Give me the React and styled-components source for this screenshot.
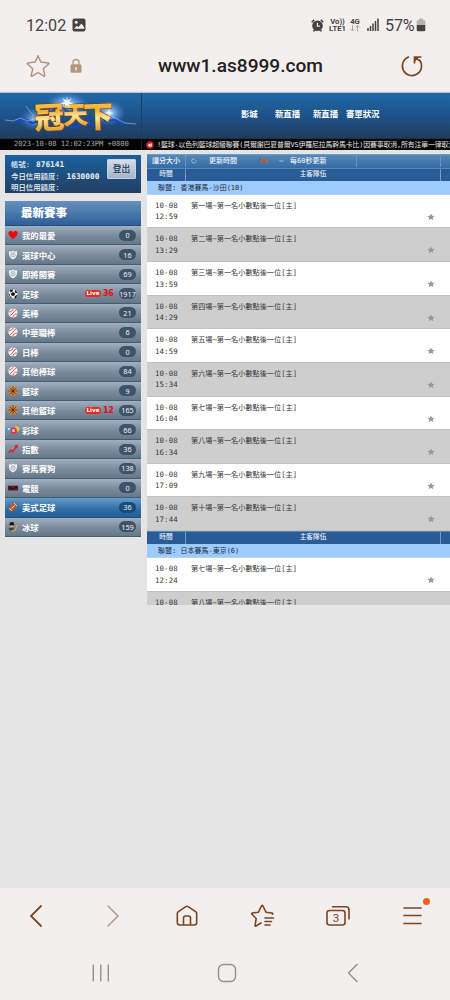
import React from 'react'
import styled, { createGlobalStyle } from 'styled-components'

const GlobalStyle = createGlobalStyle`
    * {
        box-sizing: border-box;
    }

    body {
        margin: 0;
        background: #e5e5e5;
        overflow: hidden;
    }
`

const Phone = styled.div`
    width: 450px;
    height: 1000px;
    display: flex;
    flex-direction: column;
    overflow: hidden;
    background: #e5e5e5;
    font-family: 'DejaVu Sans Mono', 'Noto Sans CJK TC', monospace;
    white-space: nowrap;
`

const StatusBar = styled.div`
    height: 50px;
    flex: none;
    padding: 0 24px 0 26px;
    display: flex;
    align-items: center;
    background: #f3efee;
    color: #454342;
    font-family: Roboto, sans-serif;
    font-size: 16.4px;
`

const Clock = styled.span`
    width: 46px;
    font-size: 16.2px;
`

const StatusIcons = styled.div`
    margin-left: auto;
    display: flex;
    align-items: center;
`

const Network = styled.div`
    width: ${props => props.width};
    margin-left: ${props => props.left};
    font-size: 7.7px;
    font-weight: 700;
    line-height: 7px;
    text-align: center;
`

const Arrows = styled.svg`
    display: block;
    margin: 0 auto;
`

const Percent = styled.span`
    margin-left: 6px;
    width: 31px;
    font-size: 16.2px;
    letter-spacing: -0.2px;
`

const AddressBar = styled.div`
    height: 41px;
    flex: none;
    padding: 0 26px 10px 25px;
    display: flex;
    align-items: center;
    background: #f3efee;
    color: #222020;
`

const Lock = styled.div`
    margin-left: 18px;
    width: 14px;
    height: 16px;
    svg {
        display: block;
    }
`

const Url = styled.span`
    flex: 1;
    padding-left: 75px;
    font-family: Roboto, sans-serif;
    font-size: 19.1px;
    font-weight: 500;
`

const SiteHeader = styled.header`
    height: 46px;
    flex: none;
    margin-top: 1px;
    display: flex;
    border-top: 1px solid #b7c4d2;
    background: linear-gradient(#1f68a9, #1e5389 50%, #203c60);
`

const LogoBox = styled.div`
    width: 142px;
    height: 45px;
    border-right: 1px solid #1b3e67;
`

const TopNav = styled.nav`
    display: flex;
    padding-left: 99px;
    line-height: 43px;
    color: white;
    font-size: 8.4px;
    font-weight: 700;
`

const TopLink = styled.a`
    width: ${props => props.width};
`

const Ticker = styled.div`
    height: 12px;
    flex: none;
    display: flex;
    align-items: center;
    overflow: hidden;
    background: #050505;
    border-top: 1px solid #23303d;
    line-height: 10px;
`

const Stamp = styled.div`
    width: 142px;
    height: 11px;
    flex: none;
    padding-left: 14px;
    border-right: 1px solid #222;
    color: #a5a5a5;
    font-size: 7.2px;
    letter-spacing: -0.08px;
`

const News = styled.div`
    margin-left: 4px;
    display: flex;
    align-items: center;
    gap: 3px;
    color: #e4e4e4;
    font-size: 6.9px;
    letter-spacing: -0.14px;
    svg {
        flex: none;
    }
`

const NewsText = styled.div`
    width: 294px;
    overflow: hidden;
`

const Main = styled.main`
    flex: 1;
    min-height: 0;
    display: flex;
    align-items: flex-start;
    gap: 6px;
    padding: 4px 0 0 5px;
`

const Sidebar = styled.aside`
    width: 136px;
    flex: none;
    padding-top: 1px;
`

const Account = styled.div`
    height: 38px;
    display: flex;
    justify-content: space-between;
    padding: 4px 5px 0 6px;
    background: linear-gradient(#1a609f, #233f62);
    color: #e9f0f7;
    font-size: 7.2px;
    font-weight: 500;
    line-height: 11.6px;
`

const AccountLine = styled.div`
    height: 11.6px;
    display: flex;
`

const Label = styled.span`
    width: ${props => props.width};
    font-size: 7.4px;
`

const Value = styled.b`
    font-size: 7.8px;
`

const Logout = styled.button`
    width: 29px;
    height: 20px;
    padding: 0;
    border: 1px solid #c6d0de;
    border-radius: 1px;
    background: linear-gradient(#d7dde8, #a3b3ca);
    color: #193a61;
    font-family: 'Noto Sans CJK TC', sans-serif;
    font-size: 8.7px;
    font-weight: 500;
    line-height: 16px;
`

const SideTitle = styled.h2`
    height: 25px;
    margin: 8px 0 0;
    padding-left: 16px;
    background: linear-gradient(#6690bd, #2f5f99);
    border-bottom: 1px solid #1f4f89;
    color: white;
    font-size: 11.5px;
    font-weight: 900;
    line-height: 24.5px;
`

const Sport = styled.div`
    height: 19.44px;
    display: flex;
    align-items: center;
    padding: 0 5px 0 3px;
    border-bottom: 1px solid ${props => (props.$active ? '#1e507f' : '#465c70')};
    background: ${props =>
        props.$active
            ? 'linear-gradient(#659ccb, #2d6ca4 60%, #255d94)'
            : 'linear-gradient(#a2afbf, #798a9b 55%, #65788a)'};
    color: white;
    font-size: 8.4px;
    font-weight: 700;
`

const SportIcon = styled.div`
    width: 11px;
    height: 10px;
    margin-right: 3px;
    svg {
        display: block;
    }
`

const Live = styled.span`
    width: 16px;
    height: 7px;
    margin-left: auto;
    border-radius: 3px;
    background: #e22c22;
    color: white;
    font-family: 'DejaVu Sans', sans-serif;
    font-size: 5.6px;
    font-weight: 700;
    line-height: 7px;
    text-align: center;
`

const LiveCount = styled.span`
    width: 11px;
    margin: 0 5px 0 2px;
    color: #e50d17;
    font-family: 'DejaVu Sans', sans-serif;
    font-size: 8px;
    font-weight: 700;
    letter-spacing: -0.2px;
`

const Count = styled.span`
    width: 17px;
    height: 11px;
    margin-left: ${props => (props.$live ? '0' : 'auto')};
    display: flex;
    align-items: center;
    justify-content: center;
    border-radius: 6px;
    background: ${props => (props.$active ? '#164b7c' : '#3e5368')};
    color: #eef2f6;
    font-family: 'Noto Sans', sans-serif;
    font-size: 7.3px;
    font-weight: 400;
`

const Odds = styled.section`
    width: 303px;
    height: 451px;
    flex: none;
    overflow: hidden;
    background: white;
`

const Tools = styled.div`
    height: 13.5px;
    display: flex;
    background: linear-gradient(#5488b7, #356ba6);
    border-top: 1px solid #6e9bc3;
    color: #f1f6fb;
    font-size: 7px;
    font-weight: 500;
    line-height: 12px;
`

const ToolCell = styled.div`
    width: ${props => props.width};
    height: 12px;
    padding-left: ${props => props.left || '0'};
    border-right: 1px solid ${props => (props.$line ? '#6a95c1' : 'transparent')};
    color: ${props => props.color || 'inherit'};
    svg {
        display: block;
        margin-top: 3px;
    }
`

const Head = styled.div`
    height: 13.4px;
    display: flex;
    border-top: 1px solid #5a86b7;
    background: #295b97;
    color: #e8eff7;
    font-size: 6.7px;
    font-weight: 500;
    line-height: 11.5px;
    text-align: center;
`

const HeadCell = styled.div`
    width: ${props => props.width};
    border-right: 1px solid #779bc4;
`

const League = styled.div`
    height: 13.8px;
    padding-left: 11px;
    background: #9dcbff;
    border-bottom: 1px solid #b8d4ef;
    color: #202b38;
    font-size: 7px;
    line-height: 14px;
`

const Match = styled.div`
    height: 33.65px;
    display: flex;
    padding-top: 5px;
    border-bottom: 1px solid #c2c2c2;
    background: ${props => (props.$odd ? '#cecece' : '#fff')};
    color: #373737;
    line-height: 11.6px;
`

const Time = styled.div`
    width: 44px;
    padding-left: 8px;
    font-size: 7.4px;
    letter-spacing: 0.1px;
`

const Team = styled.div`
    width: 236px;
    font-size: 7.17px;
`

const Favorite = styled.div`
    padding-top: 13px;
    svg {
        display: block;
    }
`

const Toolbar = styled.footer`
    height: 58px;
    flex: none;
    padding: 0 23px 3px;
    display: flex;
    align-items: center;
    justify-content: space-between;
    background: #f3efee;
`

const ToolIcon = styled.div`
    width: 28px;
    height: 28px;
    position: relative;
    svg {
        display: block;
    }
`

const Dot = styled.i`
    position: absolute;
    top: -4px;
    right: -3px;
    width: 7px;
    height: 7px;
    border-radius: 50%;
    background: #f0621f;
`

const SystemNav = styled.div`
    height: 54px;
    flex: none;
    padding: 0 83px 0 87px;
    display: flex;
    align-items: center;
    justify-content: space-between;
    background: #f3efee;
`

const brown = '#7c4521'

const sports = [
    { name: '我的最愛', icon: 'heart', count: 0 },
    { name: '滾球中心', icon: 'shield', count: 16 },
    { name: '即將開賽', icon: 'shield', count: 69 },
    { name: '足球', icon: 'soccer', count: 1917, live: 36 },
    { name: '美棒', icon: 'baseball', count: 21 },
    { name: '中華職棒', icon: 'baseball', count: 6 },
    { name: '日棒', icon: 'baseball', count: 0 },
    { name: '其他棒球', icon: 'baseball', count: 84 },
    { name: '籃球', icon: 'basketball', count: 9 },
    { name: '其他籃球', icon: 'basketball', count: 165, live: 12 },
    { name: '彩球', icon: 'lottery', count: 66 },
    { name: '指數', icon: 'chart', count: 36 },
    { name: '賽馬賽狗', icon: 'shield', count: 138 },
    { name: '電競', icon: 'esport', count: 0 },
    { name: '美式足球', icon: 'football', count: 36, active: true },
    { name: '冰球', icon: 'hockey', count: 159 },
]

const hongKong = [
    ['一', '12:59'],
    ['二', '13:29'],
    ['三', '13:59'],
    ['四', '14:29'],
    ['五', '14:59'],
    ['六', '15:34'],
    ['七', '16:04'],
    ['八', '16:34'],
    ['九', '17:09'],
    ['十', '17:44'],
]

const japan = [
    ['七', '12:24'],
    ['八', ''],
]

const glyphs = {
    heart: <path d="M5 9.2C3 7.4.3 5.4.4 3 .5.8 3.6.3 5 2.5 6.4.3 9.6.8 9.7 3 9.7 5.4 7 7.4 5 9.2Z" fill="#f00808" />,
    shield: (
        <g>
            <path d="M5 .6 6.5 1.5 9 1.2C9.4 5 8.6 7.8 5 9.5 1.4 7.8.6 5 1 1.2L3.5 1.5Z" fill="#eef2f5" />
            <circle cx="5" cy="4.8" r="2.2" fill="none" stroke="#8b98a6" strokeWidth=".7" />
            <path d="M4 4.3h2M5 4.3v1.5" stroke="#8b98a6" strokeWidth=".6" />
        </g>
    ),
    soccer: (
        <g>
            <circle cx="5" cy="5" r="4.6" fill="#eee" />
            <path d="m5 3 2.1 1.4-.8 2.4H3.700l-.8-2.400ZM2 1l3-.6-.4 1.800-2.200 1.200ZM7.400 1l2 2.700-1.600.6-1.100-1.900ZM.4 4l1.500 1.500-.5 2.300ZM2.800 7.300l1.300 2.200-2.600-1.500ZM9.600 5.600 8 9l-1.700.4.600-2.200Z" fill="#111" />
        </g>
    ),
    baseball: (
        <g>
            <circle cx="5" cy="5" r="4.6" fill="#f8f2f1" />
            <path d="M.9 3.9C2.800 3.900 4.800 2.600 5.200.6M4.800 9.300C5 7.400 7 5.800 9.200 6.100M2 8.300 8 1.800" fill="none" stroke="#df4547" strokeWidth=".9" />
        </g>
    ),
    basketball: (
        <g>
            <circle cx="5" cy="5" r="4.7" fill="#d9853a" />
            <path d="M.5 5h9M5 .5v9M1.8 1.8l6.400 6.400M8.200 1.800 1.800 8.200" stroke="#4a2811" strokeWidth=".7" />
            <circle cx="5" cy="5" r="1" fill="#4a2811" />
        </g>
    ),
    lottery: (
        <g>
            <circle cx="1.2" cy="4.4" r="2.3" fill="#45a7e4" />
            <circle cx="8.7" cy="4" r="2.8" fill="#d8cc32" />
            <circle cx="5.7" cy="5.7" r="3.2" fill="#dd3544" />
            <circle cx="5.5" cy="5.4" r="1.5" fill="#f5dce0" />
            <path d="M4.8 5.4h1.5" stroke="#a44" strokeWidth=".6" />
            <circle cx=".8" cy="4" r="1" fill="#e2eef6" />
        </g>
    ),
    chart: <path d="m.7 8.8 2.6-2.7 1.5 1.8L8.7 2M6.4 2.5l2.6-1v2.7" fill="none" stroke="#f01820" strokeWidth="1.3" />,
    esport: (
        <g>
            <path d="M0 2.7h10v4.8H0Z" fill="#541c25" />
            <path d="M1 5h2M2 4v2M7 4.5h2M4 5.5h2" stroke="#23080c" strokeWidth=".9" />
        </g>
    ),
    football: (
        <g>
            <path d="M.8 9.2C.1 4.2 4.1.2 9.2.8 9.9 5.8 5.8 9.9.8 9.2Z" fill="#b9582a" />
            <path d="M1.2 6.2 3.9 9M6 1l3 3M3.4 6.6l3.2-3.2M3.8 5l1.2 1.2M5 3.8 6.2 5" stroke="#f4e7dd" strokeWidth=".8" />
        </g>
    ),
    hockey: (
        <g>
            <circle cx="3.8" cy="2.5" r="2.4" fill="#161616" />
            <path d="M1.7 3.2h4.1v2H2Z" fill="#d6a46c" />
            <path d="M.8 6.1 6 5.5 5.2 9H2Z" fill="#353f4d" />
            <path d="M9.3 3 7.1 8.3 3 9.1" fill="none" stroke="#dfa13f" strokeWidth="1.2" />
        </g>
    ),
}

const Star = () => (
    <svg width="8" height="8" viewBox="0 0 10 10">
        <path d="m5 .5 1.3 3 3.3.2-2.5 2.1.8 3.3L5 7.3 2.1 9.1l.8-3.3L.4 3.7l3.3-.2Z" fill="#979797" />
    </svg>
)

const Logo = () => (
    <svg width="140" height="44" viewBox="0 0 140 44" overflow="visible">
        <defs>
            <linearGradient id="gold" x1="0" y1="0" x2="0" y2="1">
                <stop offset=".1" stopColor="#ffcf45" />
                <stop offset=".4" stopColor="#eeb13a" />
                <stop offset=".58" stopColor="#ffe596" />
                <stop offset=".9" stopColor="#dc931f" />
            </linearGradient>
            <radialGradient id="glow">
                <stop offset="0" stopColor="#fff" />
                <stop offset=".25" stopColor="#a7cfff" stopOpacity=".8" />
                <stop offset="1" stopColor="#3580e0" stopOpacity="0" />
            </radialGradient>
        </defs>
        <ellipse cx="67" cy="11" rx="22" ry="12" fill="url(#glow)" />
        <ellipse cx="35" cy="26" rx="16" ry="12" fill="url(#glow)" opacity=".7" />
        <ellipse cx="109" cy="20" rx="17" ry="13" fill="url(#glow)" />
        <g fill="none" strokeLinejoin="round">
            <path d="M16 28q8-4 16 2l9-2M52 17q8-5 14 0t12-3M66 32l8 3 12-5 9 2M104 28l10-1 9 3" stroke="#1845d8" strokeWidth="2.2" />
            <path d="m5 27 8 1 7-3 8 3 9-3M26 13l6 8 5 6M108 21l9 5 8 4 11 1M50 17l9-6 8 5 9-6" stroke="#9cc8ff" strokeWidth=".6" />
        </g>
        <g fontFamily="Noto Sans CJK TC, sans-serif" fontWeight="900" fill="url(#gold)" stroke="#6a4317" strokeWidth="1.3" paintOrder="stroke" strokeLinejoin="round">
            <text x="34" y="35.5" fontSize="30" transform="rotate(-3 49 23)">冠</text>
            <text x="63" y="31" fontSize="25" transform="rotate(-2 75 22)">天</text>
            <text x="83" y="34.5" fontSize="30" transform="rotate(-2 98 23)">下</text>
        </g>
        <path d="m67 3 .7 4.500 4-2.500-2.700 4 5 1.500-5 .8.7 4-2.700-3.200-2.700 3 .7-3.800-5-.8 5-1.500-2.700-4 4 2.500ZM109 15l.7 4.300 4.300.7-4.300.7-.7 4.300-.7-4.300-4.300-.7 4.300-.7Z" fill="#eef7ff" />
    </svg>
)

const TableHead = () => (
    <Head>
        <HeadCell width="39px">時間</HeadCell>
        <HeadCell width="255px">主客隊伍</HeadCell>
    </Head>
)

const Matches = ({ rows }) =>
    rows.map(([no, time], i) => (
        <Match key={no} $odd={i % 2 === 1}>
            <Time>
                10-08
                <br />
                {time}
            </Time>
            <Team>第{no}場~第一名小數點後一位[主]</Team>
            <Favorite>
                <Star />
            </Favorite>
        </Match>
    ))

const App = () => {
    return (
        <Phone>
            <GlobalStyle />
            <StatusBar>
                <Clock>12:02</Clock>
                <svg width="14" height="14" viewBox="0 0 14 14">
                    <rect x=".5" y=".5" width="13" height="13" rx="2" fill="#454342" />
                    <circle cx="4.2" cy="4.2" r="1.5" fill="#f3efee" />
                    <path d="m2 10.7 2.8-3 1.7 1.4 3-3.7 2.8 4v1.3Z" fill="#f3efee" />
                </svg>
                <StatusIcons>
                    <svg width="13" height="13" viewBox="0 0 13 13">
                        <circle cx="6.5" cy="6.8" r="5.3" fill="#454342" />
                        <path d="M.7 3.3 3.2.9M9.8.9l2.5 2.4M2.5 12.5l1.3-1.6M10.5 12.5l-1.3-1.6" stroke="#454342" strokeWidth="1.5" />
                        <path d="M6.4 3.8v3.3h2.5" fill="none" stroke="#f3efee" strokeWidth="1.2" />
                    </svg>
                    <Network width="17px" left="5px">
                        Vo))
                        <br />
                        LTE1
                    </Network>
                    <Network width="12px" left="3px">
                        4G
                        <Arrows width="10" height="7" viewBox="0 0 10 7">
                            <path d="M2.5 0v6M.5 4l2 2 2-2M7.5 6.5v-6M5.5 2.5l2-2 2 2" fill="none" stroke="#aaa6a5" />
                        </Arrows>
                    </Network>
                    <Network width="13px" left="5px">
                        <svg width="12" height="13" viewBox="0 0 12 13">
                            <path d="M1 10v3M3.5 8v5M6 5.5V13M8.5 3v10M11 .5V13" stroke="#454342" strokeWidth="1.5" />
                        </svg>
                    </Network>
                    <Percent>57%</Percent>
                    <svg width="10" height="14" viewBox="0 0 10 14">
                        <path d="M3 .5h4v1.7h1.3q1 0 1 1V7H.7V3.2q0-1 1-1H3Z" fill="#b8b4b3" />
                        <path d="M.7 7h8.6v5q0 1.3-1.3 1.3H2Q.7 13.3.7 12Z" fill="#454342" />
                    </svg>
                </StatusIcons>
            </StatusBar>

            <AddressBar>
                <svg width="26" height="26" viewBox="0 0 26 26">
                    <path d="m13 2.8 2.9 6.3 7.3.8q1.200.2.4 1.100l-5.300 4.800 1.500 6.600q.1 1.200-.9.7L13 19.700l-5.900 3.400q-1 .5-.9-.7l1.500-6.600L2.400 11q-.8-.9.4-1.100l7.300-.8Z" fill="none" stroke="#b4967f" strokeWidth="1.5" strokeLinejoin="round" />
                </svg>
                <Lock>
                    <svg width="14" height="16" viewBox="0 0 14 16">
                        <path d="M4 7V4.500a3 3 0 0 1 6 0V7" fill="none" stroke="#b4967f" strokeWidth="1.3" />
                        <rect x="1.5" y="6.3" width="11" height="8.5" rx="1.5" fill="#b4967f" />
                        <path d="M7 9v3.5" stroke="#f3efee" strokeWidth="1.3" />
                    </svg>
                </Lock>
                <Url>www1.as8999.com</Url>
                <svg width="24" height="24" viewBox="0 0 24 24">
                    <path d="M8.5 3A9.600 9.600 0 1 0 19.500 6" fill="none" stroke={brown} strokeWidth="1.6" strokeLinecap="round" />
                    <path d="M14.500 9.500V3h7" fill="none" stroke={brown} strokeWidth="1.7" />
                    <path d="M14.500 3h5l-5 5Z" fill={brown} />
                    <path d="m16 4 3.500 3" stroke={brown} strokeWidth="1.6" />
                </svg>
            </AddressBar>

            <SiteHeader>
                <LogoBox>
                    <Logo />
                </LogoBox>
                <TopNav>
                    <TopLink width="34px">影城</TopLink>
                    <TopLink width="38px">新直播</TopLink>
                    <TopLink width="33px">新直播</TopLink>
                    <TopLink width="40px">審單狀況</TopLink>
                </TopNav>
            </SiteHeader>

            <Ticker>
                <Stamp>2023-10-08 12:02:23PM +0800</Stamp>
                <News>
                    <svg width="8" height="8" viewBox="0 0 8 8">
                        <circle cx="4" cy="4" r="3.7" fill="#d61e2b" />
                        <path d="m1.5 4.3 3-2v3.6Z" fill="#fff" />
                        <path d="M5.3 2.5v3" stroke="#fff" />
                    </svg>
                    <NewsText>!籃球-以色列籃球超級聯賽(貝爾謝巴夏普爾VS伊羅尼拉馬幹馬卡比)因賽事取消,所有注單一律取消</NewsText>
                </News>
            </Ticker>

            <Main>
                <Sidebar>
                    <Account>
                        <div>
                            <AccountLine>
                                <Label width="25px">帳號:</Label>
                                <Value>876141</Value>
                            </AccountLine>
                            <AccountLine>
                                <Label width="55.5px">今日信用額度:</Label>
                                <Value>1630000</Value>
                            </AccountLine>
                            <AccountLine>
                                <Label width="55.5px">明日信用額度:</Label>
                            </AccountLine>
                        </div>
                        <Logout>登出</Logout>
                    </Account>
                    <SideTitle>最新賽事</SideTitle>
                    {sports.map(sport => (
                        <Sport key={sport.name} $active={sport.active}>
                            <SportIcon>
                                <svg width="10" height="10" viewBox="0 0 10 10" overflow="visible">
                                    {glyphs[sport.icon]}
                                </svg>
                            </SportIcon>
                            {sport.name}
                            {sport.live && <Live>Live</Live>}
                            {sport.live && <LiveCount>{sport.live}</LiveCount>}
                            <Count $active={sport.active} $live={!!sport.live}>
                                {sport.count}
                            </Count>
                        </Sport>
                    ))}
                </Sidebar>

                <Odds>
                    <Tools>
                        <ToolCell width="39px" left="5px" $line>讓分大小</ToolCell>
                        <ToolCell width="23px" left="5px">
                            <svg width="6" height="6" viewBox="0 0 6 6">
                                <path d="M4.7 1.7A2.200 2.200 0 1 1 2.500.8M2.500 0v2" fill="none" stroke="#a9c0d6" strokeWidth=".8" />
                            </svg>
                        </ToolCell>
                        <ToolCell width="50px">更新時間</ToolCell>
                        <ToolCell width="17px" color="#d0562f">
                            <b>46</b>
                        </ToolCell>
                        <ToolCell width="14px" left="3px">
                            <svg width="5" height="6" viewBox="0 0 5 6">
                                <path d="m.5 2 2 2 2-2" fill="none" stroke="#a9c0d6" />
                            </svg>
                        </ToolCell>
                        <ToolCell width="67px" $line>每60秒更新</ToolCell>
                        <ToolCell width="84px" $line />
                    </Tools>
                    <TableHead />
                    <League>聯盟: 香港賽馬-沙田(10)</League>
                    <Matches rows={hongKong} />
                    <TableHead />
                    <League>聯盟: 日本賽馬-東京(6)</League>
                    <Matches rows={japan} />
                </Odds>
            </Main>

            <Toolbar>
                <ToolIcon>
                    <svg width="28" height="28" viewBox="0 0 28 28">
                        <path d="M18 4 8 14l10 10" fill="none" stroke={brown} strokeWidth="1.8" strokeLinecap="round" />
                    </svg>
                </ToolIcon>
                <ToolIcon>
                    <svg width="28" height="28" viewBox="0 0 28 28">
                        <path d="m10 4 10 10-10 10" fill="none" stroke="#b89c89" strokeWidth="1.6" strokeLinecap="round" />
                    </svg>
                </ToolIcon>
                <ToolIcon>
                    <svg width="28" height="28" viewBox="0 0 28 28" fill="none" stroke={brown} strokeWidth="1.6">
                        <path d="M4.3 11.500q0-1 .8-1.600l7.700-5.300q1.200-.8 2.400 0l7.700 5.300q.8.600.8 1.600v9q0 2.500-2.500 2.500H6.800q-2.500 0-2.500-2.500Z" />
                        <path d="M10.500 23v-7q0-2 2-2h3q2 0 2 2v7" />
                    </svg>
                </ToolIcon>
                <ToolIcon>
                    <svg width="28" height="28" viewBox="0 0 28 28" fill="none" stroke={brown} strokeWidth="1.6" strokeLinecap="round" strokeLinejoin="round">
                        <path d="m12 21-5 3q-1 .5-.9-.7L7.200 16.500 3 12.300q-1-1 .4-1.300l6-.8L12.500 4q.7-1.200 1.400 0L17 10.200l6 .8q1.400.3.4 1.300" />
                        <path d="M16 16h8.500M16 19.500h6.500M16 23h5" />
                    </svg>
                </ToolIcon>
                <ToolIcon>
                    <svg width="28" height="28" viewBox="0 0 28 28">
                        <g fill="none" stroke={brown} strokeWidth="1.6" strokeLinecap="round">
                            <rect x="3" y="8.5" width="18" height="14.5" rx="2.5" />
                            <path d="M8.500 4.800H22q3 0 3 3V17" />
                        </g>
                        <text x="12" y="19.8" textAnchor="middle" fontFamily="Roboto" fontSize="11.5" fill={brown}>3</text>
                    </svg>
                </ToolIcon>
                <ToolIcon>
                    <svg width="28" height="28" viewBox="0 0 28 28">
                        <path d="M5 6h17M5 13.500h17M5 21.500h17" stroke={brown} strokeWidth="1.7" strokeLinecap="round" />
                    </svg>
                    <Dot />
                </ToolIcon>
            </Toolbar>

            <SystemNav>
                <svg width="28" height="24" viewBox="0 0 28 24">
                    <path d="M6.300 3.500v17M13.800 3.500v17M21.300 3.500v17" stroke="#929090" strokeWidth="1.4" />
                </svg>
                <svg width="24" height="24" viewBox="0 0 24 24">
                    <rect x="3.5" y="3.5" width="17" height="17" rx="5" fill="none" stroke="#929090" strokeWidth="1.4" />
                </svg>
                <svg width="28" height="24" viewBox="0 0 28 24">
                    <path d="m18.500 3-9 9 9 9" fill="none" stroke="#929090" strokeWidth="1.4" />
                </svg>
            </SystemNav>
        </Phone>
    )
}

export default App
